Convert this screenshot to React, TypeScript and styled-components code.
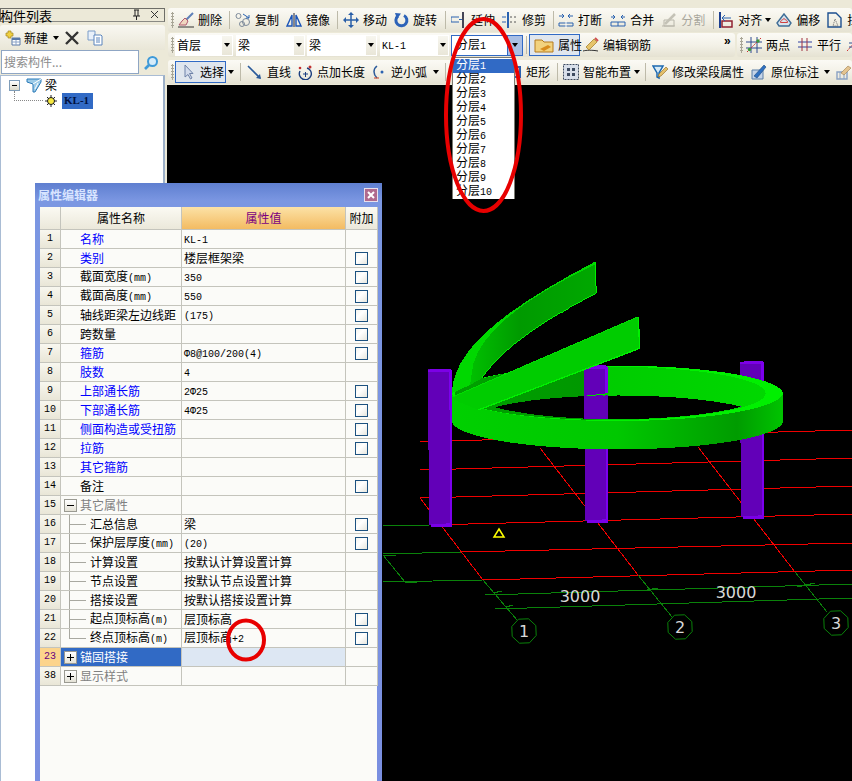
import React from "react";
import styled, { createGlobalStyle } from "styled-components";

const Global = createGlobalStyle`
  html, body { margin: 0; padding: 0; background: #ece9d8; }
  body { width: 852px; height: 781px; overflow: hidden; font: 12px/1 "Noto Sans CJK SC", "Liberation Sans", sans-serif; color: #000; }
`;

const Page = styled.div`
  position: relative;
  width: 852px;
  height: 781px;
  overflow: hidden;
  display: grid;
  grid-template-columns: 167px 685px;
  background: #ece9d8;
`;

const Lat = styled.span`
  font-family: "Liberation Mono", monospace;
  font-size: 10px;
`;

const mix = (t: string) =>
  t.split(/([\x00-\x7fΦ]+)/).map((p, i) => (i % 2 ? <Lat key={i}>{p}</Lat> : p));

/* ---------- left panel ---------- */
const Left = styled.aside`
  display: flex;
  flex-direction: column;
  padding-top: 8px;
  width: 165px;
`;
const PanelTitle = styled.div`
  height: 14px;
  box-sizing: border-box;
  border: 1px solid #6e6e68;
  border-bottom-color: #8a8a84;
  display: flex;
  align-items: center;
  font-size: 13px;
  gap: 0;
  & > span { flex: 1; margin-left: -1px; white-space: nowrap; }
`;
const PanelTools = styled.div`
  margin-top: 3px;
  height: 25px;
  display: flex;
  align-items: center;
  padding-left: 5px;
  background: linear-gradient(#f9f8f2, #e9e6d7);
  border-radius: 3px 3px 0 0;
  font-size: 12px;
`;
const SearchRow = styled.div`
  height: 25px;
  display: flex;
  align-items: flex-start;
  background: #ece9d8;
`;
const SearchInput = styled.div`
  margin-left: 1px;
  width: 138px;
  height: 24px;
  box-sizing: border-box;
  background: #fff;
  border: 1px solid #8fa6c4;
  color: #8c8c8c;
  padding: 5px 2px;
  font-size: 12px;
`;
const SearchBtn = styled.div`
  margin: 5px 0 0 4px;
  width: 18px;
  height: 18px;
`;
const Tree = styled.div`
  flex: 1;
  background: #fff;
  border: 1px solid #a9bcd4;
  border-right: 2px solid #9cb0c8;
  border-bottom: 0;
  position: relative;
  padding: 1px 0 0 8px;
`;
const TreeRow = styled.div`
  display: flex;
  align-items: center;
  height: 16px;
`;
const ExpandBox = styled.div`
  width: 9px;
  height: 9px;
  border: 1px solid #7f9db9;
  background: linear-gradient(#fff, #dcd9c8);
  position: relative;
  box-sizing: content-box;
  &::before {
    content: "";
    position: absolute;
    left: 2px;
    right: 2px;
    top: 4px;
    height: 1px;
    background: #000;
  }
`;
const TreeChild = styled(TreeRow)`
  padding-left: 36px;
  position: relative;
  &::before {
    content: "";
    position: absolute;
    left: 5px;
    top: -2px;
    width: 28px;
    height: 9px;
    border-left: 1px dotted #888;
    border-bottom: 1px dotted #888;
  }
`;
const Selected = styled.span`
  margin-left: 5px;
  background: #316ac5;
  height: 16px;
  width: 31px;
  box-sizing: border-box;
  padding: 2px 0 0 2px;
  color: #001040;
  font-family: "Liberation Serif", serif;
  font-weight: 700;
  font-size: 11px;
`;

/* ---------- toolbars ---------- */
const Main = styled.main`
  display: flex;
  flex-direction: column;
  padding-top: 8px;
  width: 685px;
  margin-left: 1px;
`;
const ToolRow = styled.div<{ $after?: number }>`
  height: 24px;
  display: flex;
  gap: 2px;
  margin-bottom: ${(p) => p.$after ?? 1}px;
  width: 684px;
`;
const Bar = styled.div<{ $w?: number }>`
  height: 24px;
  display: flex;
  align-items: center;
  flex: ${(p) => (p.$w ? `0 0 ${p.$w}px` : "1")};
  min-width: 0;
  overflow: hidden;
  white-space: nowrap;
  background: linear-gradient(#fbfaf5, #f3f1e7 50%, #e5e2d2);
  border-radius: 3px;
`;
const Grip = styled.i`
  flex: 0 0 3px;
  height: 16px;
  margin: 0 3px 0 3px;
  background: radial-gradient(circle at 1.5px 1.5px, #a8a596 1px, transparent 1.2px) 0 0 / 3px 3px;
`;
const Tool = styled.span<{ $ml?: number; $off?: boolean }>`
  display: inline-flex;
  align-items: center;
  gap: 4px;
  flex: none;
  margin-left: ${(p) => p.$ml ?? 0}px;
  color: ${(p) => (p.$off ? "#a8a69c" : "#000")};
  & > svg { flex: none; }
`;
const ActiveTool = styled(Tool)<{ $w: number }>`
  width: ${(p) => p.$w}px;
  height: 22px;
  box-sizing: border-box;
  border: 1px solid #316ac5;
  background: #e0e6ee;
  padding-left: 4px;
`;
const Sep = styled.i<{ $ml?: number }>`
  flex: 0 0 1px;
  height: 18px;
  margin-left: ${(p) => p.$ml ?? 0}px;
  background: #bdbaa9;
`;
const Caret = styled.i<{ $ml?: number }>`
  flex: none;
  width: 0;
  height: 0;
  margin-left: ${(p) => p.$ml ?? 0}px;
  border: 3.5px solid transparent;
  border-top: 4px solid #000;
  border-bottom: 0;
`;
const Chevrons = styled.b`
  margin-left: 73px;
  margin-top: -8px;
  font: 700 12px "Liberation Sans", sans-serif;
`;
const Combo = styled.div<{ $w: number; $ml?: number; $on?: boolean }>`
  flex: 0 0 ${(p) => p.$w}px;
  height: 21px;
  margin-left: ${(p) => p.$ml ?? 0}px;
  box-sizing: border-box;
  display: flex;
  background: #fff;
  border: 1px solid ${(p) => (p.$on ? "#316ac5" : "transparent")};
  padding-left: ${(p) => (p.$on ? 4 : 1)}px;
  align-items: center;
  & > span { flex: 1; }
`;
const ComboBtn = styled.div<{ $on?: boolean }>`
  flex: 0 0 ${(p) => (p.$on ? 14 : 10)}px;
  align-self: stretch;
  display: flex;
  align-items: center;
  justify-content: center;
  background: ${(p) => (p.$on ? "#a9bfe4" : "linear-gradient(#f7f6ef,#e9e6d8)")};
  border-left: ${(p) => (p.$on ? "1px solid #316ac5" : "0")};
`;

/* ---------- canvas ---------- */
const Canvas = styled.div`
  flex: 1;
  margin-left: -1px;
  background: #000;
  overflow: hidden;
  & > svg { display: block; }
`;

/* ---------- property dialog ---------- */
const Dialog = styled.section`
  position: absolute;
  left: 35px;
  top: 183px;
  width: 347px;
  height: 598px;
  box-sizing: border-box;
  padding: 0 5px;
  display: flex;
  flex-direction: column;
  background: linear-gradient(#5f7fd0, #7b97e2 3%, #7a8fe0);
`;
const DlgTitle = styled.header`
  height: 24px;
  flex: none;
  display: flex;
  align-items: center;
  justify-content: space-between;
  color: #d8e4ff;
  font-weight: 700;
  font-size: 12px;
  margin-left: -2px;
`;
const CloseBtn = styled.span`
  width: 12px;
  height: 12px;
  border: 1px solid #e8e0ec;
  background: #b06a8e;
  display: flex;
  align-items: center;
  justify-content: center;
  margin-right: -1px;
`;
const DlgBody = styled.div`
  flex: 1;
  background: #fbfbf8;
`;
const Row = styled.div<{ $h?: number }>`
  display: grid;
  grid-template-columns: 21px 121px 164px 32px;
  height: ${(p) => p.$h ?? 19}px;
`;
const cell = `
  box-sizing: border-box;
  border-right: 1px solid #c4c4bc;
  border-bottom: 1px solid #c4c4bc;
  display: flex;
  align-items: center;
  white-space: nowrap;
  overflow: hidden;
`;
const HeadCell = styled.div<{ $hot?: boolean }>`
  ${cell}
  justify-content: center;
  background: ${(p) => (p.$hot ? "linear-gradient(#fce2a6,#f3bb62)" : "linear-gradient(#fbfaf3,#ebe8da)")};
  color: ${(p) => (p.$hot ? "#7a0080" : "#000")};
`;
const NumCell = styled.div<{ $hot?: boolean }>`
  ${cell}
  justify-content: center;
  background: ${(p) => (p.$hot ? "#fcd48c" : "linear-gradient(#f8f7ef,#e9e6d7)")};
  color: ${(p) => (p.$hot ? "#6a0080" : "#000")};
`;
const NameCell = styled.div<{ $tone?: string; $child?: boolean; $last?: boolean; $sel?: boolean }>`
  ${cell}
  position: relative;
  padding-left: ${(p) => (p.$child ? 29 : 19)}px;
  color: ${(p) => p.$tone ?? "#000"};
  background: ${(p) => (p.$sel ? "#316ac5" : "transparent")};
  ${(p) =>
    p.$child &&
    `&::before { content: ""; position: absolute; left: 8px; top: 0; height: ${p.$last ? 10 : 19}px; border-left: 1px solid #a8a8a0; }
     &::after { content: ""; position: absolute; left: 8px; top: 9px; width: 17px; border-top: 1px solid #a8a8a0; }`}
`;
const NodeBox = styled.span<{ $open?: boolean }>`
  position: absolute;
  left: 3px;
  top: 3px;
  width: 11px;
  height: 11px;
  border: 1px solid #9a9a92;
  background: linear-gradient(#fff, #e4e2d6);
  &::before {
    content: "";
    position: absolute;
    left: 2px;
    right: 2px;
    top: 5px;
    height: 1px;
    background: #000;
  }
  ${(p) =>
    !p.$open &&
    `&::after { content: ""; position: absolute; top: 2px; bottom: 2px; left: 5px; width: 1px; background: #000; }`}
`;
const ValueCell = styled.div<{ $sel?: boolean }>`
  ${cell}
  padding-left: 2px;
  background: ${(p) => (p.$sel ? "#dde7f3" : "transparent")};
`;
const AddCell = styled.div`
  ${cell}
  padding-left: 9px;
`;
const Check = styled.span`
  width: 11px;
  height: 11px;
  border: 1px solid #1c5180;
  background: linear-gradient(135deg, #f4f4ee, #fff 40%, #e6e6de);
`;

/* ---------- floating list and marks ---------- */
const List = styled.div`
  position: absolute;
  left: 452px;
  top: 57px;
  width: 63px;
  height: 142px;
  box-sizing: border-box;
  background: #fff;
  border: 1px solid #7a7a72;
  padding-top: 1px;
`;
const ListItem = styled.div<{ $on?: boolean }>`
  height: 14px;
  line-height: 10px;
  padding-left: 3px;
  background: ${(p) => (p.$on ? "#316ac5" : "#fff")};
  color: ${(p) => (p.$on ? "#fff" : "#000")};
`;
const Marks = styled.svg`
  position: absolute;
  left: 0;
  top: 0;
  pointer-events: none;
`;

/* ---------- icons ---------- */
const I = ({ children, w = 16 }: { children: React.ReactNode; w?: number }) => (
  <svg width={w} height={16} viewBox={`0 0 ${w} 16`} fill="none">{children}</svg>
);
const icons: Record<string, React.ReactNode> = {
  broom: <I><path d="M15 1 8 8" stroke="#5d7fb8" strokeWidth="2" /><path d="M4 9l3-3 3 3-2 4H1z" fill="#f0d7c0" stroke="#b05a70" /><path d="M0 15h16" stroke="#333" /></I>,
  copy: <I><circle cx="3.5" cy="4" r="2.5" stroke="#7d8a9a" /><circle cx="11" cy="10" r="3.5" stroke="#7d8a9a" /><circle cx="7" cy="12" r="2.5" stroke="#7d8a9a" /><path d="M8 2l6 4M14 6h-3M14 6V3" stroke="#2a62b0" /></I>,
  mirror: <I><path d="M8 1v14" stroke="#223" /><path d="M6 3v11H1zM10 3v11h5z" stroke="#1c55b8" strokeWidth="1.4" /></I>,
  move: <I><path d="M8 1v14M1 8h14" stroke="#2a5fa8" strokeWidth="1.5" /><path d="M8 0l3 3H5zM8 16l3-3H5zM0 8l3-3v6zM16 8l-3-3v6z" fill="#2a5fa8" /></I>,
  rotate: <I><path d="M11 3.5a5.5 5.5 0 1 1-6 .5" stroke="#2c62b8" strokeWidth="3" /><path d="M2 1l6 .5L4 7z" fill="#2c62b8" /></I>,
  extend: <I><path d="M0 5h8M0 10h8M0 5v5" stroke="#2a62b0" /><path d="M11 0h2v16h-2z" fill="#445" /><path d="M8 7.5h3" stroke="#2a62b0" /></I>,
  trim: <I><path d="M5 0h2v16H5z" fill="#2a62b0" /><path d="M0 5h4M0 10h4" stroke="#2a62b0" /><path d="M8 5h2M12 5h2M8 10h2M12 10h2" stroke="#555" /></I>,
  breakIt: <I w={16}><path d="M1 11h14M1 14h14M1 11v3M15 11v3" stroke="#2a62b0" /><path d="M1 4h5M6 4L4 2M6 4L4 6M15 4h-5M10 4l2-2M10 4l2 2" stroke="#2a62b0" /><path d="M8 9v7" stroke="#fff" /></I>,
  merge: <I><path d="M1 10h14v4H1zM8 10v4" stroke="#2a62b0" /><path d="M1 5h4M5 5L3 3M5 5L3 7M15 5h-4M11 5l2-2M11 5l2 2" stroke="#2a62b0" /></I>,
  split: <I w={16}><path d="M1 14h13M3 8h10v6H3z" stroke="#b8b6aa" /><path d="M4 12L14 2" stroke="#c4c2b6" strokeWidth="2.5" /></I>,
  align: <I w={16}><path d="M2 0v16" stroke="#1c3f90" strokeWidth="2" /><path d="M4 9h10v6H4z" stroke="#902030" strokeWidth="1.5" /><path d="M4 6h9M4 6l3-3M4 6l3 3" stroke="#2a62b0" /></I>,
  offset: <I><path d="M1 11l7-9 7 9-2 3H3z" stroke="#3f6d96" strokeWidth="1.4" fill="#d8e4ee" /><path d="M4.5 10.5c0-3 2-2 3.5-4 1.5 2 3.5 1 3.5 4z" stroke="#d04040" /></I>,
  doc: <I><path d="M1 1h8l5 5v9H1z" stroke="#1c4f90" strokeWidth="1.4" /><path d="M8 7l3 7H6z" stroke="#666" strokeDasharray="1 1" /></I>,
  pencil: <I><path d="M0 14c3-1 10-1 15 0" stroke="#333" /><path d="M3 10l8-8 3 3-8 8z" fill="#e6c46a" stroke="#a07820" strokeWidth=".7" /><path d="M12 1l3 3" stroke="#d05050" strokeWidth="2" /></I>,
  folder: <I w={20}><path d="M1 3h7l2 2h9v10H1z" fill="#f2d27e" stroke="#b47a1e" /><path d="M6 12l8-4 3 2-7 4z" fill="#d88c1e" /></I>,
  twoPts: <I><path d="M0 5h16M0 11h16M5 0v16M11 0v16" stroke="#2e4a90" /><path d="M1 15L15 1" stroke="#cc3030" strokeDasharray="2 1" /><circle cx="3.5" cy="12.5" r="1.7" fill="#3a9a3a" /><circle cx="12" cy="4" r="1.7" fill="#3a9a3a" /></I>,
  parallel: <I><path d="M1 5h14M1 10h14" stroke="#3040a0" /><path d="M5 1v13M10 1v13" stroke="#a03040" /></I>,
  slash: <I><path d="M0 14L10 3" stroke="#cc3030" strokeDasharray="2 1" /><path d="M2 6h12M2 10h12" stroke="#2e4a90" /></I>,
  cursor: <I><path d="M5 1v12l3-2.5L10.5 15l1.5-1-2.5-4.5h3.5z" fill="#d4dcec" stroke="#6f82a8" /></I>,
  line: <I><path d="M1 2l12 12" stroke="#2a5a9a" strokeWidth="1.6" /><path d="M14 15l-1-5-4 4z" fill="#2a5a9a" /></I>,
  pointLen: <I><path d="M3 7a6 6 0 1 0 7-3" stroke="#1c3f80" strokeWidth="1.4" /><path d="M6 10h5M8.5 8v5" stroke="#1c3f80" /><circle cx="13" cy="3" r="1.5" fill="#c03030" /><circle cx="3" cy="4" r="1.3" fill="#c03030" /></I>,
  arc: <I><path d="M6 2C2 5 2 10 6 14" stroke="#2a5a9a" strokeWidth="1.5" /><path d="M3 14h5" stroke="#d04020" /><circle cx="11" cy="8" r="1.5" fill="#2a62b0" /></I>,
  rect: <I><rect x="2" y="3" width="12" height="10" stroke="#2a62b0" strokeWidth="2" /></I>,
  smart: <I><rect x=".5" y=".5" width="15" height="15" stroke="#3c4a60" fill="#d8dfea" strokeDasharray="2 1" /><path d="M4 4h3v3H4zM9 9h3v3H9zM9 4h3v3H9zM4 9h3v3H4z" fill="#3c4a60" /></I>,
  funnel: <I><path d="M1 2h10L7 9v5L5 13V9z" stroke="#1c68b0" strokeWidth="1.5" fill="#d6eaf6" /><path d="M7 10l7-7 2 2-7 7-3 1z" fill="#e4c06a" stroke="#906820" strokeWidth=".6" /></I>,
  anno: <I w={16}><path d="M1 6h11v9H1z" fill="#c5d4e8" stroke="#5a7fa8" /><path d="M3 12L13 1l2 2L6 14z" fill="#3070c0" stroke="#1c4a80" strokeWidth=".6" /></I>,
  last: <I><path d="M1 8h10v7H1z" stroke="#8aa2c4" strokeWidth="1.4" /><path d="M4 8v7M8 8v7" stroke="#8aa2c4" /><path d="M5 9l7-7 3 2-7 7z" fill="#e4c490" stroke="#a08050" strokeWidth=".6" /></I>,
};

type Item = { kind?: "sep" | "caret"; icon?: string; label?: string; ml?: number; off?: boolean };

const row1: Item[] = [
  { icon: "broom", label: "删除", ml: 1 },
  { kind: "sep", ml: 7 },
  { icon: "copy", label: "复制", ml: 5 },
  { icon: "mirror", label: "镜像", ml: 7 },
  { kind: "sep", ml: 7 },
  { icon: "move", label: "移动", ml: 5 },
  { icon: "rotate", label: "旋转", ml: 6 },
  { kind: "sep", ml: 8 },
  { icon: "extend", label: "延伸", ml: 5 },
  { icon: "trim", label: "修剪", ml: 7 },
  { kind: "sep", ml: 7 },
  { icon: "breakIt", label: "打断", ml: 4 },
  { icon: "merge", label: "合并", ml: 8 },
  { icon: "split", label: "分割", ml: 7, off: true },
  { kind: "sep", ml: 8 },
  { icon: "align", label: "对齐", ml: 4 },
  { kind: "caret", ml: 3 },
  { icon: "offset", label: "偏移", ml: 5 },
  { icon: "doc", label: "拉", ml: 7 },
];
const row3: Item[] = [
  { kind: "caret", ml: 2 },
  { kind: "sep", ml: 6 },
  { icon: "line", label: "直线", ml: 6 },
  { icon: "pointLen", label: "点加长度", ml: 6 },
  { icon: "arc", label: "逆小弧", ml: 6 },
  { kind: "caret", ml: 6 },
  { kind: "sep", ml: 6 },
  { icon: "rect", label: "矩形", ml: 60 },
  { kind: "sep", ml: 7 },
  { icon: "smart", label: "智能布置", ml: 5 },
  { kind: "caret", ml: 3 },
  { kind: "sep", ml: 5 },
  { icon: "funnel", label: "修改梁段属性", ml: 6 },
  { icon: "anno", label: "原位标注", ml: 7 },
  { kind: "caret", ml: 5 },
  { icon: "last", ml: 6 },
];

const Items = ({ list }: { list: Item[] }) => (
  <>
    {list.map((it, i) =>
      it.kind === "sep" ? (
        <Sep key={i} $ml={it.ml} />
      ) : it.kind === "caret" ? (
        <Caret key={i} $ml={it.ml} />
      ) : (
        <Tool key={i} $ml={it.ml} $off={it.off}>
          {icons[it.icon!]}
          {it.label}
        </Tool>
      )
    )}
  </>
);

/* ---------- table data ---------- */
const B = "#0000ff";
const G = "#808080";
type P = { n: number; name: string; val?: string; tone?: string; check?: boolean; child?: boolean; last?: boolean; node?: "open" | "closed"; sel?: boolean };
const props: P[] = [
  { n: 1, name: "名称", val: "KL-1", tone: B },
  { n: 2, name: "类别", val: "楼层框架梁", tone: B, check: true },
  { n: 3, name: "截面宽度(mm)", val: "350", check: true },
  { n: 4, name: "截面高度(mm)", val: "550", check: true },
  { n: 5, name: "轴线距梁左边线距", val: " (175)", check: true },
  { n: 6, name: "跨数量", check: true },
  { n: 7, name: "箍筋", val: " Φ8@100/200(4)", tone: B, check: true },
  { n: 8, name: "肢数", val: "4", tone: B },
  { n: 9, name: "上部通长筋", val: "2Φ25", tone: B, check: true },
  { n: 10, name: "下部通长筋", val: "4Φ25", tone: B, check: true },
  { n: 11, name: "侧面构造或受扭筋", tone: B, check: true },
  { n: 12, name: "拉筋", tone: B, check: true },
  { n: 13, name: "其它箍筋", tone: B },
  { n: 14, name: "备注", check: true },
  { n: 15, name: "其它属性", tone: G, node: "open" },
  { n: 16, name: "汇总信息", val: "梁", child: true, check: true },
  { n: 17, name: "保护层厚度(mm)", val: " (20)", child: true, check: true },
  { n: 18, name: "计算设置", val: "按默认计算设置计算", child: true },
  { n: 19, name: "节点设置", val: "按默认节点设置计算", child: true },
  { n: 20, name: "搭接设置", val: "按默认搭接设置计算", child: true },
  { n: 21, name: "起点顶标高(m)", val: "层顶标高", child: true, check: true },
  { n: 22, name: "终点顶标高(m)", val: "层顶标高+2", child: true, last: true, check: true },
  { n: 23, name: "锚固搭接", tone: "#fff", node: "closed", sel: true },
  { n: 38, name: "显示样式", tone: G, node: "closed" },
];

/* ---------- CAD scene ---------- */
const RED = "#f00000";
const GRN = "#0a820a";
const hex = (cx: number, cy: number) =>
  Array.from({ length: 8 }, (_, i) => {
    const a = (i / 8) * Math.PI * 2 + 0.35;
    return `${(cx + 13 * Math.cos(a)).toFixed(1)},${(cy + 13 * Math.sin(a)).toFixed(1)}`;
  }).join(" ");

const HOLE = "M225,472C400,425 780,425 965,470C780,520 400,520 225,472Z";
const OUT = "M95,430A498,87 0 0 1 1090,430A498,87 0 0 1 95,430Z";
const IN = "M105,430A466,80 0 0 1 1037,430A466,80 0 0 1 105,430Z";
const WALL = "M95,430A498,87 0 0 1 1090,430L1090,515A498,87 0 0 1 95,515Z";

const Column = ({ x, top, bot }: { x: number; top: number; bot: number }) => (
  <g>
    <polygon points={`${x},${top} ${x + 64},${top} ${x + 66},${bot - 8} ${x + 3},${bot - 4}`} fill="#6200b8" />
    <polygon points={`${x + 64},${top} ${x + 71},${top + 2} ${x + 71},${bot} ${x + 66},${bot}`} fill="#7c00ee" />
    <polygon points={`${x},${top + 2} ${x + 18},${top - 2} ${x + 66},${top - 2} ${x + 71},${top + 2} ${x + 64},${top + 8} ${x},${top + 8}`} fill="#7c00e6" />
    <polygon points={`${x + 8},${bot - 8} ${x + 71},${bot - 10} ${x + 71},${bot} ${x + 8},${bot + 1}`} fill="#7a00e8" />
  </g>
);

const Scene = () => (
  <svg width={685} height={696} viewBox="167 85 685 696">
    <g shapeRendering="crispEdges" strokeWidth="1" fill="none">
      <path d="M420,441.7L852,430M420,470L852,458M420,498L852,486M430,525L852,514M462,552L852,543M483,580L852,570" stroke={RED} />
      <path d="M420,498L483,580M540,448L638,575M698,447L795,572" stroke={RED} />
      <path d="M383,526L430,525M383,554L462,552M383,582L483,580M485,595L852,584M495,609L852,598" stroke={GRN} />
      <path d="M383,555L405,582M483,580L517,620M638,575L672,617M795,572L827,612" stroke={GRN} />
      <path d="M393,581L417,583M493,593L502,591M506,607L513,605M641,591L658,588M797,587L815,583M383,555L396,556" stroke={GRN} />
    </g>
    <g strokeWidth="1" stroke={GRN} fill="#000">
      <polygon points={hex(524, 631)} />
      <polygon points={hex(680, 627)} />
      <polygon points={hex(836, 623)} />
    </g>
    <g fontFamily="'DejaVu Sans', sans-serif" fontSize="16" fill="#d8d8d8" textAnchor="middle">
      <text x="524" y="637">1</text>
      <text x="680" y="633">2</text>
      <text x="836" y="629">3</text>
      <text x="580" y="602">3000</text>
      <text x="736" y="598">3000</text>
    </g>
    <polygon points="499,529 504,537 494,537" fill="none" stroke="#ffff00" strokeWidth="1.5" />
    <g transform="translate(420 250) scale(0.33333)" shapeRendering="crispEdges">
      <defs>
        <linearGradient id="wall" gradientUnits="userSpaceOnUse" x1="95" x2="1090" y1="0" y2="0">
          <stop offset="0" stopColor="#00d000" />
          <stop offset=".5" stopColor="#00c800" />
          <stop offset=".86" stopColor="#009c00" />
          <stop offset="1" stopColor="#00c400" />
        </linearGradient>
        <linearGradient id="inner" gradientUnits="userSpaceOnUse" x1="105" x2="1037" y1="0" y2="0">
          <stop offset="0" stopColor="#00a000" />
          <stop offset=".42" stopColor="#009800" />
          <stop offset=".48" stopColor="#00cc00" />
          <stop offset="1" stopColor="#00d800" />
        </linearGradient>
        <linearGradient id="sweep" gradientUnits="userSpaceOnUse" x1="150" x2="525" y1="0" y2="0">
          <stop offset="0" stopColor="#00c000" />
          <stop offset=".4" stopColor="#009a00" />
          <stop offset="1" stopColor="#00a800" />
        </linearGradient>
      </defs>
      <Column x={492} top={350} bot={818} />
      <Column x={960} top={335} bot={806} />
      <path d={WALL + HOLE} fill="url(#wall)" fillRule="evenodd" />
      <path d={OUT + HOLE} fill="#00f000" fillRule="evenodd" />
      <path d={IN + HOLE} fill="url(#inner)" fillRule="evenodd" />
      <polygon points="492,350 556,350 556,436 492,440" fill="#6200b8" />
      <polygon points="556,350 563,352 563,430 556,430" fill="#7c00ee" />
      <polygon points="492,352 510,346 556,346 563,352 556,358 492,358" fill="#7c00e6" />
      <polygon points="492,440 563,436 563,508 492,505" fill="#6200b8" />
      <path d="M500,436L555,434" stroke="#00e000" strokeWidth="3" />
      <path d="M95,430C100,290 270,170 525,35L529,130C380,205 250,290 185,385L150,405L95,430Z" fill="url(#sweep)" />
      <path d="M95,430C100,290 270,170 525,35L525,44C320,140 190,240 160,340L150,405L95,430Z" fill="#00d800" />
      <path d="M529,130C380,205 250,290 185,385" stroke="#00f000" strokeWidth="3" fill="none" />
      <path d="M525,35L529,130" stroke="#00f000" strokeWidth="3" fill="none" />
      <path d="M95,442L655,200L659,295L175,480L108,452Z" fill="#00cc00" />
      <path d="M175,480L659,295L655,200" stroke="#00f000" strokeWidth="4" fill="none" />
      <path d="M95,442L655,200" stroke="#00e000" strokeWidth="3" fill="none" />
      <Column x={24} top={358} bot={830} />
    </g>
  </svg>
);

export default function App() {
  return (
    <>
      <Global />
      <Page>
        <Left>
          <PanelTitle>
            <span>构件列表</span>
            <svg width="12" height="12" viewBox="0 0 12 12" fill="none">
              <path d="M4 1h5M5 1v6M8 1v6M3 7h7M6.5 7v4" stroke="#222" />
            </svg>
            <svg width="22" height="12" viewBox="0 0 22 12" fill="none">
              <path d="M9 2l7 7M16 2l-7 7" stroke="#333" />
            </svg>
          </PanelTitle>
          <PanelTools>
            <svg width="16" height="16" viewBox="0 0 16 16" fill="none">
              <path d="M3 1h3v2h2v3H6v2H3V6H1V3h2z" fill="#f0d040" stroke="#a08420" strokeWidth=".7" />
              <path d="M7 8h8v7H7z" fill="#fff" stroke="#5878a8" />
              <path d="M7 8h8v2H7z" fill="#5878a8" />
              <path d="M7 12h8M11 10v5" stroke="#8ca4c8" />
            </svg>
            <Tool $ml={3}>新建</Tool>
            <Caret $ml={5} />
            <svg width="14" height="14" viewBox="0 0 14 14" style={{ marginLeft: 6 }} fill="none">
              <path d="M1 1l12 12M13 1L1 13" stroke="#333" strokeWidth="2.4" />
            </svg>
            <svg width="16" height="16" viewBox="0 0 16 16" style={{ marginLeft: 8 }} fill="none">
              <path d="M1 1h7v9H1z" fill="#e8f0fa" stroke="#7a9cc8" />
              <path d="M7 5h7l1 1v9H7z" fill="#fff" stroke="#5a84bc" />
              <path d="M9 8h4M9 10h4M9 12h4" stroke="#5a84bc" />
            </svg>
          </PanelTools>
          <SearchRow>
            <SearchInput>搜索构件...</SearchInput>
            <SearchBtn>
              <svg width="16" height="16" viewBox="0 0 16 16" fill="none">
                <circle cx="9.5" cy="6.5" r="4.5" fill="#d6ecfa" stroke="#3f9ad8" strokeWidth="2" />
                <path d="M6 10l-4 4" stroke="#3f9ad8" strokeWidth="2.6" />
              </svg>
            </SearchBtn>
          </SearchRow>
          <Tree>
            <TreeRow>
              <ExpandBox />
              <svg width="16" height="16" viewBox="0 0 16 16" style={{ marginLeft: 6 }} fill="none">
                <path d="M1 2h14v3L9 15H7V7L1 5z" fill="#9ccbe8" stroke="#2a7ab8" />
                <path d="M7 7l8-5M9 12l3-6" stroke="#fff" />
              </svg>
              <Tool $ml={3}>梁</Tool>
            </TreeRow>
            <TreeChild>
              <svg width="12" height="12" viewBox="0 0 12 12" fill="none">
                <circle cx="6" cy="6" r="3.5" fill="#f6e840" stroke="#222" />
                <path d="M6 0v3M6 9v3M0 6h3M9 6h3M2 2l2 2M8 8l2 2M10 2L8 4M4 8l-2 2" stroke="#222" />
              </svg>
              <Selected>KL-1</Selected>
            </TreeChild>
          </Tree>
        </Left>

        <Main>
          <ToolRow>
            <Bar>
              <Grip />
              <Items list={row1} />
            </Bar>
          </ToolRow>
          <ToolRow $after={3}>
            <Bar $w={567}>
              <Grip />
              <Combo $w={58} $ml={-2}><span>首层</span><ComboBtn><Caret /></ComboBtn></Combo>
              <Combo $w={69} $ml={3}><span>梁</span><ComboBtn><Caret /></ComboBtn></Combo>
              <Combo $w={70} $ml={2}><span>梁</span><ComboBtn><Caret /></ComboBtn></Combo>
              <Combo $w={69} $ml={3}><span><Lat>KL-1</Lat></span><ComboBtn><Caret /></ComboBtn></Combo>
              <Combo $w={72} $ml={2} $on><span>{mix("分层1")}</span><ComboBtn $on><Caret /></ComboBtn></Combo>
              <Sep $ml={3} />
              <ActiveTool $w={51} $ml={2}>{icons.folder}属性</ActiveTool>
              <Tool $ml={3}>{icons.pencil}编辑钢筋</Tool>
              <Chevrons>»</Chevrons>
            </Bar>
            <Bar>
              <Grip />
              <Tool $ml={0}>{icons.twoPts}两点</Tool>
              <Tool $ml={7}>{icons.parallel}平行</Tool>
              <Tool $ml={6}>{icons.slash}</Tool>
            </Bar>
          </ToolRow>
          <ToolRow>
            <Bar>
              <Grip />
              <ActiveTool $w={51} $ml={-2}>{icons.cursor}选择</ActiveTool>
              <Items list={row3} />
            </Bar>
          </ToolRow>
          <Canvas>
            <Scene />
          </Canvas>
        </Main>

        <Dialog>
          <DlgTitle>
            属性编辑器
            <CloseBtn>
              <svg width="8" height="8" viewBox="0 0 8 8" fill="none">
                <path d="M1 1l6 6M7 1L1 7" stroke="#fff" strokeWidth="2" />
              </svg>
            </CloseBtn>
          </DlgTitle>
          <DlgBody>
            <Row $h={23}>
              <HeadCell />
              <HeadCell>属性名称</HeadCell>
              <HeadCell $hot>属性值</HeadCell>
              <HeadCell>附加</HeadCell>
            </Row>
            {props.map((p) => (
              <Row key={p.n}>
                <NumCell $hot={p.sel}><Lat>{p.n}</Lat></NumCell>
                <NameCell $tone={p.tone} $child={p.child} $last={p.last} $sel={p.sel}>
                  {p.node && <NodeBox $open={p.node === "open"} />}
                  <span>{mix(p.name)}</span>
                </NameCell>
                <ValueCell $sel={p.sel}>{p.val && <span>{mix(p.val)}</span>}</ValueCell>
                <AddCell>{p.check && <Check />}</AddCell>
              </Row>
            ))}
          </DlgBody>
        </Dialog>

        <List>
          {Array.from({ length: 10 }, (_, i) => (
            <ListItem key={i} $on={i === 0}>{mix(`分层${i + 1}`)}</ListItem>
          ))}
        </List>

        <Marks width={852} height={781} viewBox="0 0 852 781" fill="none">
          <ellipse cx="483.5" cy="115" rx="37.5" ry="96" stroke="#e80000" strokeWidth="4" />
          <ellipse cx="246" cy="640" rx="18" ry="19.5" stroke="#e80000" strokeWidth="4" />
        </Marks>
      </Page>
    </>
  );
}
